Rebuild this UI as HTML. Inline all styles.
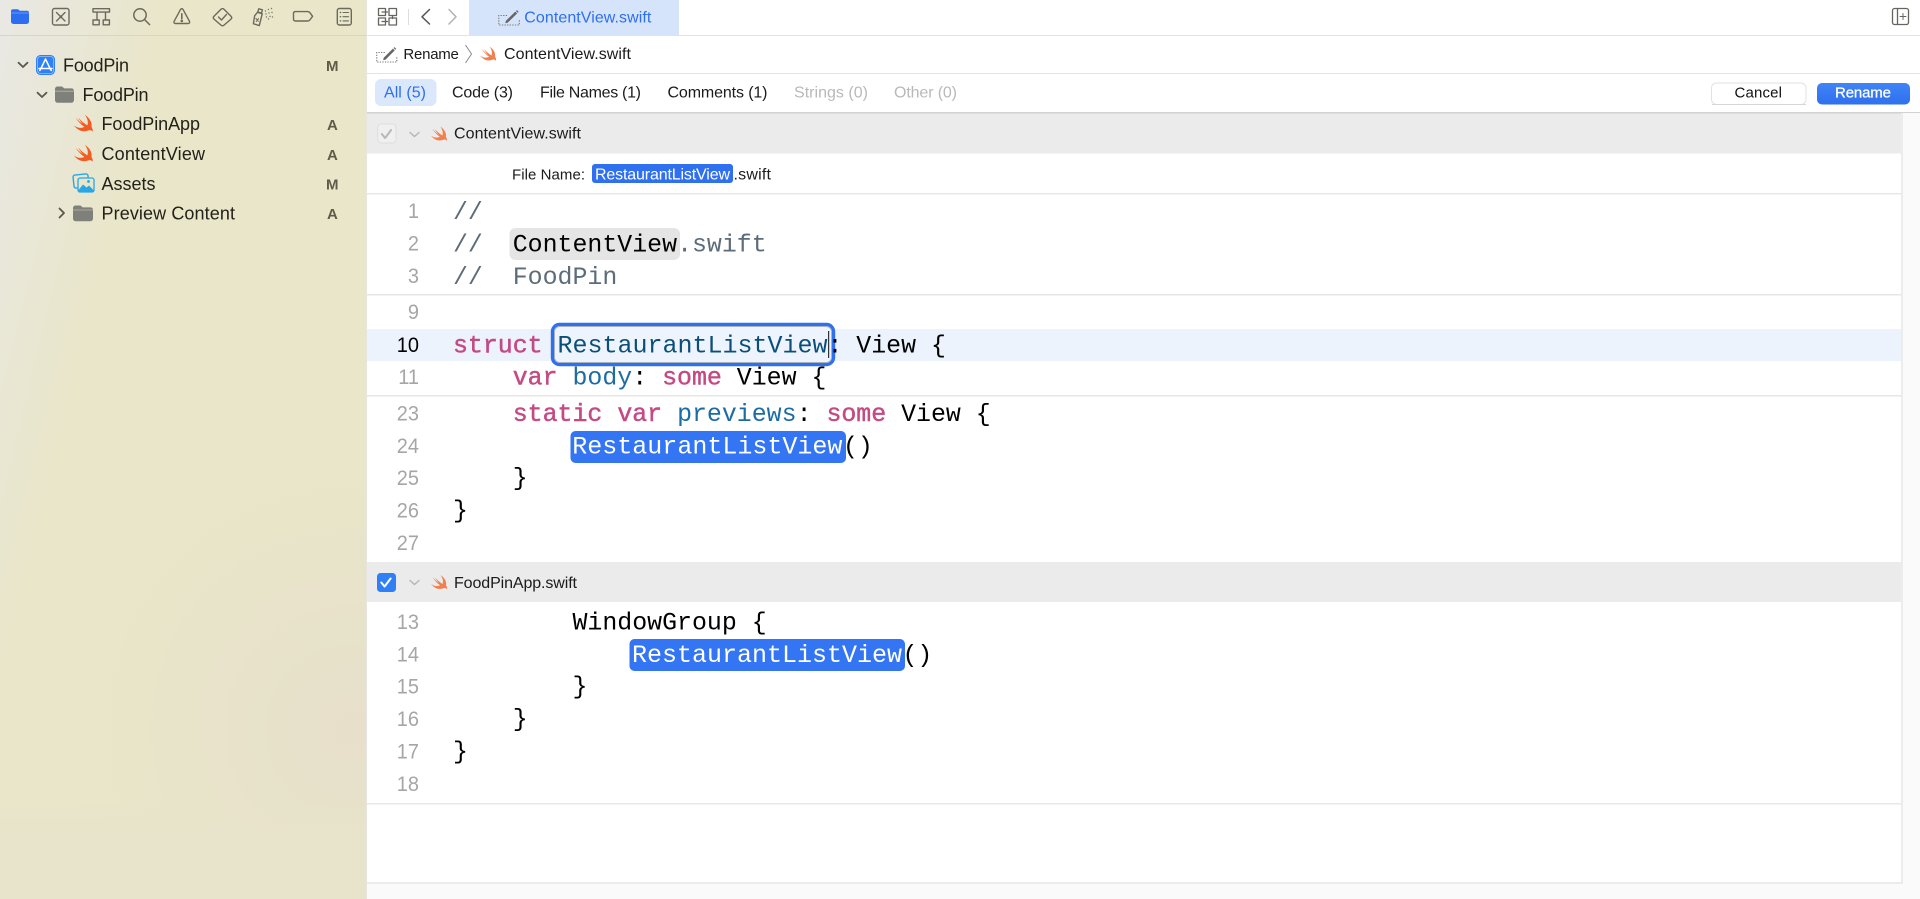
<!DOCTYPE html>
<html><head><meta charset="utf-8"><title>Xcode Rename</title>
<style>
html,body{margin:0;padding:0;background:#fff;overflow:hidden}
svg{display:block}
text{font-family:"Liberation Sans",sans-serif;white-space:pre}
.s{font-size:18px;fill:#23221a}
.b{font-size:15px;font-weight:700;fill:#5e5c49}
.u{font-size:16px;fill:#1b1b1b}
.v{font-size:15px}
.c{font-family:"Liberation Mono",monospace;font-size:24.9px;fill:#000}
.r{font-size:25px}
.n{font-size:21px;fill:#a6a6a6;text-anchor:end}
.k{fill:#c44a84;stroke:#c44a84;stroke-width:.45px}.t{fill:#1c6ca3}.g{fill:#5d6c79}
.ic{fill:none;stroke:#6b6a5c;stroke-width:1.4;stroke-linecap:round;stroke-linejoin:round}
.id{fill:none;stroke:#66665f;stroke-width:1.3;stroke-linecap:round;stroke-linejoin:round}
</style></head>
<body>
<svg width="1920" height="899" viewBox="0 0 1920 899" xmlns="http://www.w3.org/2000/svg">
<defs>
<linearGradient id="sb" x1="0" y1="0" x2="0.5" y2="0.3"><stop offset="0" stop-color="#e9e8e4"/><stop offset=".3" stop-color="#e9e7d8"/><stop offset=".7" stop-color="#e9e6c9"/><stop offset="1" stop-color="#e9e6c9"/></linearGradient>
<radialGradient id="pk" gradientUnits="userSpaceOnUse" cx="350" cy="730" r="320"><stop offset="0" stop-color="#e8dfca"/><stop offset=".15" stop-color="#e7e0ca"/><stop offset=".5" stop-color="#e7e2ca" stop-opacity=".6"/><stop offset="1" stop-color="#e9e6c9" stop-opacity="0"/></radialGradient>
<linearGradient id="btm" x1="0" y1="0" x2="0" y2="1"><stop offset="0" stop-color="#e8e3cb" stop-opacity="0"/><stop offset=".4" stop-color="#e8e3cb"/><stop offset="1" stop-color="#e8e3cb"/></linearGradient>
<linearGradient id="rn" x1="0" y1="0" x2="0" y2="1"><stop offset="0" stop-color="#3f84f8"/><stop offset="1" stop-color="#2f70ee"/></linearGradient>
<symbol id="swift" viewBox="0 0 24 24"><path d="M1.5 13.5C5 16.5 9.5 17 13 15.2 9 12.5 5.5 8.5 3.5 5.2 6.3 8.3 9 10.5 11.5 12.2 9.5 10 7.8 7.8 6.3 5 9.5 8.6 13 11.6 16.2 13.5 17.4 10.2 16.6 6 13.5 2 18.5 5 21.8 10.6 20.7 15.2 22 17 22.4 19 21.8 20.4 20.7 18.6 19 18.3 17.2 19 13 21 6 20 1.5 13.5Z" fill="currentColor"/></symbol>
<symbol id="folder" viewBox="0 0 20 17" preserveAspectRatio="none"><path d="M0 3a2.5 2.5 0 0 1 2.5-2.5h4.2c.9 0 1.4.4 2 1l.9.9h7.9A2.5 2.5 0 0 1 20 4.9V14a2.8 2.8 0 0 1-2.8 2.8H2.8A2.8 2.8 0 0 1 0 14Z" fill="#80807a"/><path d="M0 5.2h20" stroke="#e9e6c9" stroke-opacity=".55" stroke-width=".8"/></symbol>
<symbol id="pen" viewBox="0 0 22 17" preserveAspectRatio="none"><path d="M9 6.5H.8V16h20.500V10" fill="none" stroke="#777" stroke-width="1.100" stroke-dasharray="1.300 1.300"/><path d="M7.300 14.200l.6-2.400L17.300 2.600l1.900 1.800-9.400 9.200Z" fill="#666"/><path d="M17.900 2l1-.9 1.800 1.800-.9.9Z" fill="#666"/></symbol>
</defs>

<!-- sidebar -->
<rect x="0" y="0" width="366" height="899" fill="url(#sb)"/>
<rect x="0" y="400" width="366" height="499" fill="url(#pk)"/>
<rect x="0" y="800" width="366" height="99" fill="url(#btm)"/>
<rect x="0" y="35" width="366" height="1" fill="#d7d5c8"/>
<rect x="366" y="0" width="1" height="899" fill="#e8e5e0"/>

<!-- navigator toolbar -->
<path d="M11 11.2a2 2 0 0 1 2-2h4.300c.8 0 1.200.3 1.700.8l.8.8h7.200a2 2 0 0 1 2 2v8.700a2.500 2.500 0 0 1-2.500 2.500h-13a2.500 2.500 0 0 1-2.500-2.500Z" fill="#2c6df2"/><path d="M11 13h18" stroke="#7ea7f6" stroke-width=".8"/>
<g class="ic"><rect x="52.5" y="8.5" width="16.5" height="16.5" rx="2"/><path d="M56.5 12.5l3 3M65 12.5l-3 3M56.5 21l3-3M65 21l-3-3"/><circle cx="60.8" cy="16.8" r=".8" fill="#6b6a5c"/></g>
<g class="ic"><rect x="93" y="8.7" width="16.5" height="3.4"/><path d="M97 12.2v7M105.5 12.2v7"/><rect x="93" y="20" width="6.2" height="4.8"/><rect x="103.2" y="20" width="6.2" height="4.8"/></g>
<g class="ic" style="stroke-width:1.5"><circle cx="140" cy="15" r="6.2"/><path d="M144.6 19.6 149.6 24.6"/></g>
<g class="ic"><path d="M180.5 9.6c.8-1.3 1.9-1.3 2.6 0l6.3 11.6c.7 1.3.1 2.3-1.3 2.3H175.500c-1.400 0-2-1-1.300-2.300Z"/><path d="M181.8 13.800v4.800" style="stroke-width:1.600"/><circle cx="181.800" cy="20.900" r=".6" fill="#6b6a5c"/></g>
<g class="ic"><path d="M221 9.200c.9-.9 2.100-.9 3 0l7 7c.9.9.9 2 0 2.900l-7 6c-.9.8-2.100.8-3 0l-7-6c-.9-.9-.9-2 0-2.900Z"/><path d="M218.500 17l3 3 5-5.600"/></g>
<g class="ic"><path d="M257.200 12.300 262 13.600 259.700 25.500 253.700 24 254.500 16Z" transform="rotate(3 258 18)"/><rect x="258.200" y="9.200" width="3.800" height="3.400" transform="rotate(15 260 11)"/><path d="M255.800 18.400l2.600 2.800M258.600 18.600l-2.400 3" style="stroke-width:1"/></g>
<g fill="#7a796b"><circle cx="265.500" cy="11" r=".7"/><circle cx="268.500" cy="9.500" r=".7"/><circle cx="271.500" cy="8.500" r=".7"/><circle cx="266" cy="14" r=".7"/><circle cx="269" cy="13" r=".7"/><circle cx="272" cy="12.500" r=".7"/><circle cx="266.500" cy="17" r=".7"/><circle cx="270" cy="16.500" r=".7"/><circle cx="272.500" cy="17" r=".7"/><circle cx="268.500" cy="19" r=".7"/></g>
<path class="ic" d="M295.500 11.600h12c1 0 1.700.3 2.300 1l2.800 3.700-2.800 3.700c-.6.7-1.300 1-2.300 1h-12c-1.200 0-2-.8-2-2v-5.400c0-1.200.8-2 2-2Z"/>
<g class="ic"><rect x="337.300" y="8.500" width="14" height="16.500" rx="2"/><path d="M343 12.500h5.500M343 16.700h5.500M343 20.900h5.500" style="stroke-width:1.100"/><path d="M340.300 12.500h.3M340.300 16.700h.3M340.300 20.900h.3"/></g>

<!-- navigator tree -->
<g fill="none" stroke="#5a594c" stroke-width="1.800" stroke-linecap="round" stroke-linejoin="round">
<path d="M18.500 62.700 23 67 27.500 62.700"/><path d="M37.500 92.700 42 97 46.500 92.700"/><path d="M59.500 208.500 64 213 59.500 217.500"/>
</g>
<rect x="36" y="55" width="19" height="20" rx="4.500" fill="#2f7ff7"/><rect x="37.500" y="56.500" width="16" height="17" rx="3" fill="none" stroke="#9ac2fb" stroke-width=".8"/>
<path d="M45.500 59 49.800 68M45.500 59 41.200 68M39 68.500h13M41.200 68l-1.400 2.500M49.800 68l1.400 2.500" stroke="#fff" stroke-width="1.500" fill="none" stroke-linecap="round"/>
<use href="#folder" x="55" y="86" width="19" height="17"/>
<use href="#swift" x="72.500" y="113" width="22" height="22" color="#f05c22"/>
<use href="#swift" x="72.500" y="143" width="22" height="22" color="#f05c22"/>
<g><rect x="73.500" y="174.500" width="15" height="13" rx="2" fill="none" stroke="#27a7e6" stroke-width="1.400" transform="rotate(-6 81 181)"/><rect x="78" y="178" width="16" height="14" rx="2" fill="#e9e6c9" stroke="#27a7e6" stroke-width="1.300"/><path d="M78.500 190 83 184.500 86.500 187.500 89 185.500 93.500 190v.5a1.500 1.500 0 0 1-1.500 1.500H80a1.500 1.500 0 0 1-1.500-1.500Z" fill="#27a7e6"/><circle cx="88.500" cy="181.500" r="1.400" fill="#27a7e6"/></g>
<use href="#folder" x="73" y="205" width="20" height="16.500"/>
<text class="s" x="63" y="71.600" textLength="66">FoodPin</text>
<text class="s" x="82.500" y="101" textLength="66">FoodPin</text>
<text class="s" x="101.500" y="130" textLength="98.500">FoodPinApp</text>
<text class="s" x="101.500" y="160" textLength="103.500">ContentView</text>
<text class="s" x="101.500" y="190" textLength="54">Assets</text>
<text class="s" x="101.500" y="219.500" textLength="133.500">Preview Content</text>
<text class="b" x="326" y="71" textLength="12.500">M</text>
<text class="b" x="327" y="130" textLength="10.500">A</text>
<text class="b" x="327" y="160" textLength="10.500">A</text>
<text class="b" x="326" y="189.500" textLength="12.500">M</text>
<text class="b" x="327" y="219" textLength="10.500">A</text>

<!-- top bar -->
<rect x="469" y="0" width="210" height="35" fill="#d6e4fb"/>
<g class="id"><rect x="378.500" y="8.500" width="7" height="7"/><rect x="378.500" y="18" width="7" height="7"/><rect x="389" y="8.500" width="7.500" height="7"/><rect x="389" y="18" width="7.500" height="7"/><path d="M382 12h5.500M392.500 18.500v-3M382 21.500h5.500"/></g>
<rect x="408" y="9" width="1" height="16" fill="#dcdcdc"/>
<path d="M429.500 9.500 422 16.800 429.500 24" fill="none" stroke="#555" stroke-width="1.500" stroke-linecap="round" stroke-linejoin="round"/>
<path d="M449 9.500 456 16.800 449 24" fill="none" stroke="#b4b4b4" stroke-width="1.500" stroke-linecap="round" stroke-linejoin="round"/>
<use href="#pen" x="498" y="9" width="22" height="17"/>
<text class="u" style="fill:#2d6ff0" x="524.300" y="22.500" textLength="127">ContentView.swift</text>
<g class="id"><rect x="1892.500" y="8.500" width="16" height="16" rx="2"/><path d="M1897.500 8.500v16"/><path d="M1903 13.500v6M1900 16.500h6" style="stroke-width:1"/></g>
<rect x="367" y="35" width="1553" height="1" fill="#e3e3e3"/>

<!-- breadcrumb -->
<use href="#pen" x="376" y="46" width="21.500" height="17"/>
<text class="u v" x="403.400" y="59" textLength="55.500">Rename</text>
<path d="M465.500 45 471.500 54 465.500 63" fill="none" stroke="#8a8a8a" stroke-width="1"/>
<use href="#swift" x="479" y="45" width="18.600" height="18.600" color="#f0804e"/>
<text class="u" x="504" y="59" textLength="127">ContentView.swift</text>
<rect x="367" y="73" width="1553" height="1" fill="#e3e3e3"/>

<!-- filter bar -->
<rect x="375" y="79" width="61.500" height="27" rx="6" fill="#dbe8fc"/>
<text class="u" style="fill:#2d6ff0" x="384" y="97.500" textLength="42">All (5)</text>
<text class="u" x="452" y="97.500" textLength="61">Code (3)</text>
<text class="u" x="540" y="97.500" textLength="101">File Names (1)</text>
<text class="u" x="667.500" y="97.500" textLength="100">Comments (1)</text>
<text class="u" style="fill:#b9b9b9" x="794" y="97.500" textLength="74">Strings (0)</text>
<text class="u" style="fill:#b9b9b9" x="894" y="97.500" textLength="63">Other (0)</text>
<rect x="1711.500" y="83" width="94.500" height="21.500" rx="5" fill="#fff" stroke="#e2e2e2" stroke-width="1"/>
<rect x="1712" y="104" width="94" height="1" fill="#d6d6d6"/>
<text class="u v" style="fill:#111" x="1734.500" y="97.500" textLength="47.500">Cancel</text>
<rect x="1817" y="83" width="93" height="21.500" rx="5" fill="url(#rn)"/>
<text class="u v" style="fill:#fff;stroke:#fff;stroke-width:.25px" x="1835" y="97.500" textLength="56">Rename</text>
<rect x="367" y="112" width="1553" height="1.500" fill="#d2d2d2"/>

<!-- right gutter -->
<rect x="1903" y="113" width="17" height="786" fill="#fafafa"/>
<rect x="1901" y="113" width="2" height="771" fill="#ececec"/>
<rect x="367" y="882" width="1536" height="2" fill="#ececec"/>
<rect x="367" y="884" width="1553" height="15" fill="#fafafa"/>

<!-- section 1 header -->
<rect x="367" y="113.500" width="1534" height="40" fill="#ebebeb"/>
<rect x="377.700" y="124" width="18.300" height="19" rx="3.500" fill="#f0f0f0" stroke="#dedede"/>
<path d="M381.800 134l3.300 4 6-8" fill="none" stroke="#b8b8b8" stroke-width="2" stroke-linecap="round" stroke-linejoin="round"/>
<path d="M410 132.500 414.500 136.500 419 132.500" fill="none" stroke="#b5b5b5" stroke-width="1.400" stroke-linecap="round" stroke-linejoin="round"/>
<use href="#swift" x="429.800" y="125" width="18.600" height="18.600" color="#f0804e"/>
<text class="u" x="454" y="138.700" textLength="127">ContentView.swift</text>
<text class="u v" x="512" y="179.300" textLength="73">File Name:</text>
<rect x="592" y="164" width="141" height="19" rx="3" fill="#2f70ee"/>
<text class="u" style="fill:#fff" x="595" y="179.300" textLength="135">RestaurantListView</text>
<text class="u" x="733.500" y="179.300" textLength="37.500">.swift</text>
<rect x="367" y="193" width="1534" height="1.500" fill="#e8e8e8"/>

<!-- code separators & highlights -->
<rect x="367" y="294" width="1534" height="1.500" fill="#e6e6e6"/>
<rect x="367" y="395" width="1534" height="1.500" fill="#e6e6e6"/>
<rect x="367" y="329" width="1534" height="32" fill="#ecf3fd"/>
<rect x="509.500" y="228" width="170.500" height="32" rx="6" fill="#e5e5e5"/>

<!-- gutter numbers -->
<g>
<text class="n" transform="translate(419,218.200) scale(.95,1)">1</text>
<text class="n" transform="translate(419,250.600) scale(.95,1)">2</text>
<text class="n" transform="translate(419,283) scale(.95,1)">3</text>
<text class="n" transform="translate(419,319) scale(.95,1)">9</text>
<text class="n" style="fill:#000" transform="translate(419,352) scale(.95,1)">10</text>
<text class="n" transform="translate(419,384) scale(.95,1)">11</text>
<text class="n" transform="translate(419,420.500) scale(.95,1)">23</text>
<text class="n" transform="translate(419,452.800) scale(.95,1)">24</text>
<text class="n" transform="translate(419,485) scale(.95,1)">25</text>
<text class="n" transform="translate(419,517.500) scale(.95,1)">26</text>
<text class="n" transform="translate(419,550) scale(.95,1)">27</text>
<text class="n" transform="translate(419,629) scale(.95,1)">13</text>
<text class="n" transform="translate(419,661.500) scale(.95,1)">14</text>
<text class="n" transform="translate(419,693.700) scale(.95,1)">15</text>
<text class="n" transform="translate(419,726) scale(.95,1)">16</text>
<text class="n" transform="translate(419,758.500) scale(.95,1)">17</text>
<text class="n" transform="translate(419,791) scale(.95,1)">18</text>
</g>

<!-- code -->
<text class="c g" x="453" y="219">//</text>
<text class="c" x="453" y="251.300"><tspan class="g">//  </tspan>ContentView<tspan class="g">.swift</tspan></text>
<text class="c g" x="453" y="284">//  FoodPin</text>

<text class="c" x="453" y="352.700"><tspan class="k">struct</tspan>                     View {</text>
<rect x="552.500" y="324.500" width="281" height="40" rx="7" fill="#eef4fd" stroke="#2f70ee" stroke-width="3.400"/>
<rect x="554.500" y="326.500" width="277" height="36" rx="5" fill="none" stroke="#a9b1bb" stroke-width="1"/>
<text class="c r" style="fill:#0b4f79" x="557.500" y="352.700">RestaurantListView</text>
<text class="c" x="827.500" y="352.700">:</text>
<rect x="828" y="331" width="1.200" height="27" fill="#333"/>
<text class="c" x="453" y="384.700">    <tspan class="k">var</tspan> <tspan class="t">body</tspan>: <tspan class="k">some</tspan> View {</text>

<text class="c" x="453" y="421.200">    <tspan class="k">static</tspan> <tspan class="k">var</tspan> <tspan class="t">previews</tspan>: <tspan class="k">some</tspan> View {</text>
<rect x="570.500" y="431" width="275.500" height="32" rx="5" fill="#3375f2"/>
<text class="c r" style="fill:#fff" x="572.300" y="453.700">RestaurantListView</text>
<text class="c" x="843" y="453.700">()</text>
<text class="c" x="453" y="485">    }</text>
<text class="c" x="453" y="517.500">}</text>

<!-- section 2 header -->
<rect x="367" y="562" width="1534" height="40" fill="#ebebeb"/>
<rect x="377" y="573" width="19" height="19" rx="3.500" fill="#2f7ff7"/>
<path d="M381.300 582.500l3.300 4 6-8" fill="none" stroke="#fff" stroke-width="2" stroke-linecap="round" stroke-linejoin="round"/>
<path d="M410 580.500 414.500 584.500 419 580.500" fill="none" stroke="#b5b5b5" stroke-width="1.400" stroke-linecap="round" stroke-linejoin="round"/>
<use href="#swift" x="430" y="573.500" width="18.600" height="18.600" color="#f0804e"/>
<text class="u" x="454" y="588" textLength="123">FoodPinApp.swift</text>

<text class="c" x="453" y="629.500">        WindowGroup {</text>
<rect x="629.500" y="639" width="275.500" height="32" rx="5" fill="#3375f2"/>
<text class="c r" style="fill:#fff" x="632" y="662">RestaurantListView</text>
<text class="c" x="902.500" y="662">()</text>
<text class="c" x="453" y="693.700">        }</text>
<text class="c" x="453" y="726">    }</text>
<text class="c" x="453" y="758.500">}</text>
<rect x="367" y="803" width="1534" height="1.500" fill="#e8e8e8"/>
</svg>
</body></html>
